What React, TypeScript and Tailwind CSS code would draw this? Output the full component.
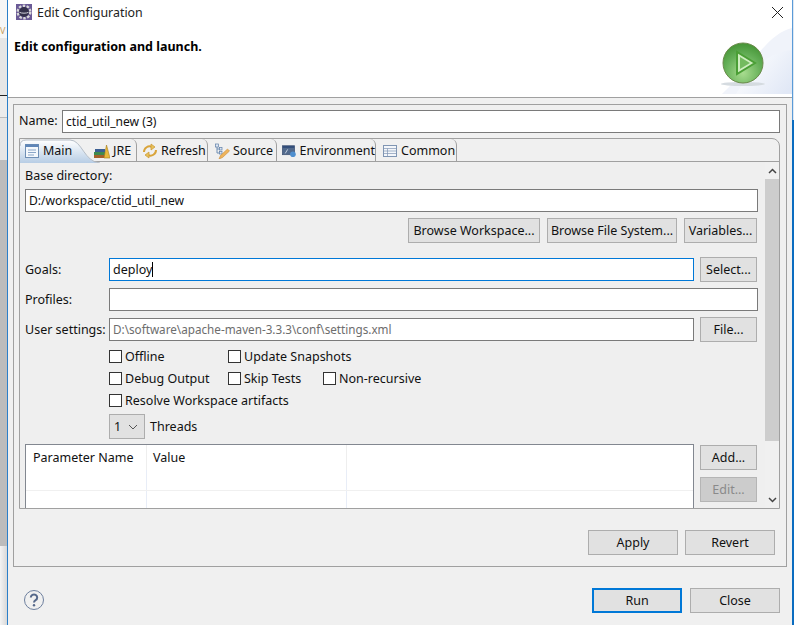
import React from "react";

function Btn({ w, children, disabled, primary, className = "" }: { w: string; children: React.ReactNode; disabled?: boolean; primary?: boolean; className?: string }) {
  const look = primary
    ? "border-2 border-[#0078d7] bg-[#e1e1e1] text-[#111]"
    : disabled
    ? "border border-[#b5b5b5] bg-[#cccccc] text-[#8a8a8a]"
    : "border border-[#adadad] bg-[#e1e1e1] text-[#111]";
  return (
    <div className={`${w} ${look} ${className} h-[25px] shrink-0 flex items-center justify-center`}>{children}</div>
  );
}

function Field({ w, children, focus, muted, tight }: { w: string; children?: React.ReactNode; focus?: boolean; muted?: boolean; tight?: boolean }) {
  return (
    <div className={`${w} h-[23px] shrink-0 bg-white border flex items-center pl-[3px] ${focus ? "border-[#0078d7]" : "border-[#7a7a7a]"} ${muted ? "text-[#6d6d6d] text-[11.7px] pb-[2px]" : "text-[#111]"} ${tight ? "text-[12.1px]" : ""}`}>
      {children}
    </div>
  );
}

function Check({ label, w }: { label: string; w?: string }) {
  return (
    <div className={`flex items-center h-[22px] ${w ?? ""}`}>
      <div className="w-[13px] h-[13px] bg-white border border-[#333] mr-[3px] shrink-0" />
      <span className="text-[#111] pt-[2px]">{label}</span>
    </div>
  );
}

const MainIcon = () => (
  <svg width="16" height="16" viewBox="0 0 16 16"><rect x="1.5" y="1.5" width="13" height="13" fill="#f4f8fc" stroke="#6f8fb5" /><rect x="1.5" y="1.5" width="13" height="2.5" fill="#5f86b8" /><path d="M4 7h8M4 9.500h8M4 12h6" stroke="#8aa6c8" /></svg>
);
const JreIcon = () => (
  <svg width="16" height="16" viewBox="0 0 16 16"><rect x="0" y="12" width="11" height="3" fill="#a5612a" /><rect x="0" y="9" width="11" height="3" fill="#3f8a4e" /><rect x="1" y="6" width="10" height="3" fill="#3b5f93" /><path d="M10 15 12.500 2 16 15z" fill="#e8b93a" stroke="#a67c1a" strokeWidth=".6" /></svg>
);
const RefreshIcon = () => (
  <svg width="16" height="16" viewBox="0 0 16 16" fill="none" stroke="#d9a43a" strokeWidth="2"><path d="M2 9a5.500 5.500 0 0 1 8-5" /><path d="m9 1 4 3-4 3z" fill="#e8c25c" stroke="#c9952e" strokeWidth=".7" /><path d="M14 7a5.500 5.500 0 0 1-8 5" /><path d="m7 15-4-3 4-3z" fill="#e8c25c" stroke="#c9952e" strokeWidth=".7" /></svg>
);
const SourceIcon = () => (
  <svg width="16" height="16" viewBox="0 0 16 16" fill="none"><path d="M3 3v7h3M3 6h3" stroke="#6f8fb5" /><rect x="1.500" y="1" width="3" height="3" fill="#dfe8f3" stroke="#5f7fa8" strokeWidth=".7" /><rect x="5.500" y="4.500" width="2.500" height="2.500" fill="#dfe8f3" stroke="#5f7fa8" strokeWidth=".7" /><rect x="5.500" y="8.500" width="2.500" height="2.500" fill="#dfe8f3" stroke="#5f7fa8" strokeWidth=".7" /><path d="m5 16 1.500-3.500 7-6.500 2 2-7 6.500z" fill="#eeb45c" stroke="#c98b35" strokeWidth=".6" /></svg>
);
const EnvIcon = () => (
  <svg width="18" height="16" viewBox="0 0 18 16"><rect x="0.500" y="1.500" width="15" height="11" fill="#51698c" stroke="#46597a" /><rect x="1" y="2" width="14" height="2" fill="#2e4a78" /><path d="m4 11 3-5" stroke="#dfe8f3" /><circle cx="13.500" cy="12" r="3.500" fill="#4f8fcf" /></svg>
);
const CommonIcon = () => (
  <svg width="16" height="16" viewBox="0 0 16 16" fill="#f3f6fa" stroke="#7f95b3"><rect x="1.500" y="2.500" width="13" height="11" /><path d="M1.500 5.500h13M1.500 8h13M1.500 10.500h13M5.500 5.500v8" fill="none" strokeWidth=".7" /></svg>
);

function Tab({ w, pl, icon, label }: { w: string; pl: string; icon: React.ReactNode; label: string }) {
  return (
    <div className={`${w} ${pl} h-[23px] shrink-0 flex items-center gap-[3px] relative border-r border-[#a0a0a0] rounded-tr-[6px]`}>
      {icon}
      <span className="text-[#111] whitespace-nowrap">{label}</span>
    </div>
  );
}

function MainTab() {
  return (
    <div className="w-[72px] pl-[4px] h-[23px] shrink-0 flex items-center gap-[3px] relative">
      <svg className="absolute left-0 top-0" width="80" height="24" viewBox="0 0 80 24">
        <defs>
          <linearGradient id="tabg" x1="0" x2="0" y1="0" y2="1"><stop offset="0" stopColor="#ffffff" /><stop offset="1" stopColor="#b7cde5" /></linearGradient>
        </defs>
        <path d="M0 24V7Q0 1 6 1H50C62 1 64 23 80 24Z" fill="url(#tabg)" />
        <path d="M0 7Q0 1 6 1H50C62 1 64 23 80 24" fill="none" stroke="#b4bcc6" />
      </svg>
      <span className="relative"><MainIcon /></span>
      <span className="text-[#111] relative">Main</span>
    </div>
  );
}

function LeftStrip() {
  return (
    <div className="w-[7px] h-full shrink-0 flex flex-col overflow-hidden box-content border-r border-[#2b7fc9]">
      <div className="h-[23px] shrink-0 bg-[#f6f6f6]" />
      <div className="h-[15px] shrink-0 bg-[#f6f6f6] text-[#c9a060] text-[9px] leading-[15px]">V</div>
      <div className="h-[57px] shrink-0 bg-[#e6e6e6]" />
      <div className="h-px shrink-0 bg-[#222]" />
      <div className="h-[22px] shrink-0 bg-[#ececec] border-b border-[#bbbbbb]" />
      <div className="h-[42px] shrink-0 bg-[#e6e6e6]" />
      <div className="h-[386px] shrink-0 bg-[#bcbcbc]" />
      <div className="flex-1 bg-gradient-to-r from-[#f4f4f4] to-[#d8d8d8]" />
    </div>
  );
}

export default function App() {
  return (
    <div className="w-[794px] h-[625px] overflow-hidden flex bg-white text-[12.500px] leading-[18px]" style={{ fontFamily: '"Noto Sans", sans-serif' }}>
      <LeftStrip />

      {/* dialog */}
      <div className="w-[784px] h-full shrink-0 flex flex-col bg-[#f0f0f0]">
        {/* header */}
        <div className="h-[98px] shrink-0 bg-white border-b border-[#a0a0a0] relative">
          <div className="h-[24px] flex items-center pl-[8px] gap-[5px]">
            <svg width="16" height="16" viewBox="0 0 16 16">
              <rect width="16" height="16" fill="#6a5a96" />
              <circle cx="8" cy="8" r="6.300" fill="none" stroke="#d8d8d8" strokeWidth="2.400" strokeDasharray="2.500 1.450" />
              <circle cx="8" cy="8" r="5" fill="#33304a" />
              <path d="M3.500 8.300c2 1.200 7 1.200 9 0" fill="none" stroke="#cfcfd8" />
            </svg>
            <span className="text-[#222] text-[12.400px] pt-[2px]">Edit Configuration</span>
          </div>
          <div className="pl-[6px] mt-[14px] font-bold text-[#000]">Edit configuration and launch.</div>
          <svg className="absolute right-[9px] top-[7px]" width="11" height="11" viewBox="0 0 11 11"><path d="M0 0l11 11M11 0 0 11" stroke="#222" strokeWidth="1" /></svg>
          {/* banner */}
          <svg className="absolute right-0 top-[26px]" width="90" height="68" viewBox="0 0 90 68">
            <defs>
              <radialGradient id="ball" cx=".5" cy=".75" r=".8"><stop offset="0" stopColor="#a8dc8f" /><stop offset=".6" stopColor="#62ad55" /><stop offset="1" stopColor="#3f8f2f" /></radialGradient>
              <linearGradient id="bg" x1="0" x2="1" y1=".2" y2=".8"><stop offset="0" stopColor="#ffffff" /><stop offset="1" stopColor="#e1e8f6" /></linearGradient>
            </defs>
            <path d="M20 68C50 40 65 8 90 2V68Z" fill="#f0f3fa" />
            <path d="M34 68C52 40 68 26 90 24V68Z" fill="url(#bg)" />
            <ellipse cx="41" cy="58" rx="22" ry="2" fill="#d5dbe0" />
            <circle cx="41" cy="37" r="20" fill="url(#ball)" stroke="#6a8a4a" />
            <path d="M35 26v22l18-11z" fill="#cfeec0" stroke="#4b9f36" strokeWidth="2" />
            <path d="M38 31v12l10-6z" fill="#74bb5f" />
          </svg>
        </div>

        {/* panel */}
        <div className="ml-[5px] mt-[6px] w-[774px] h-[463px] shrink-0 border border-[#a0a0a0] pt-[5px] pl-[5px] pr-[6px]">
          <div className="flex items-center h-[23px] gap-[5px]">
            <span className="w-[38px] text-[#111] pb-px">Name:</span>
            <Field w="w-[718px]" tight>ctid_util_new (3)</Field>
          </div>

          {/* folder */}
          <div className="mt-[5px] w-[761px] h-[371px] border border-[#a0a0a0] rounded-tr-[8px] overflow-hidden flex flex-col">
            <div className="flex h-[23px] shrink-0 border-b border-[#a0a0a0]">
              <MainTab />
              <Tab w="w-[45px]" pl="pl-[2px]" icon={<JreIcon />} label="JRE" />
              <Tab w="w-[71px]" pl="pl-[5px]" icon={<RefreshIcon />} label="Refresh" />
              <Tab w="w-[69px]" pl="pl-[6px]" icon={<SourceIcon />} label="Source" />
              <Tab w="w-[99px]" pl="pl-[5px]" icon={<EnvIcon />} label="Environment" />
              <Tab w="w-[81px]" pl="pl-[6px]" icon={<CommonIcon />} label="Common" />
            </div>
            <div className="flex flex-1 min-h-0 bg-[#efefef]">
              <div className="w-[744px] shrink-0 pl-[5px] overflow-hidden">
                <div className="mt-[5px] h-[18px] text-[#111]">Base directory:</div>
                <div className="mt-[4px]"><Field w="w-[733px]" tight>D:/workspace/ctid_util_new</Field></div>
                <div className="mt-[6px] flex justify-end w-[732px] gap-[7px]">
                  <Btn w="w-[132px]">Browse Workspace...</Btn>
                  <Btn w="w-[130px]">Browse File System...</Btn>
                  <Btn w="w-[73px]">Variables...</Btn>
                </div>
                <div className="mt-[14px] flex items-center h-[25px]">
                  <span className="w-[84px] text-[#111]">Goals:</span>
                  <Field w="w-[585px]" focus>deploy<span className="w-px h-[15px] bg-black" /></Field>
                  <Btn w="w-[57px]" className="ml-[6px]">Select...</Btn>
                </div>
                <div className="mt-[5px] flex items-center h-[25px]">
                  <span className="w-[84px] text-[#111]">Profiles:</span>
                  <Field w="w-[649px]" />
                </div>
                <div className="mt-[5px] flex items-center h-[25px]">
                  <span className="w-[84px] text-[#111]">User settings:</span>
                  <Field w="w-[585px]" muted>D:\software\apache-maven-3.3.3\conf\settings.xml</Field>
                  <Btn w="w-[57px]" className="ml-[6px]">File...</Btn>
                </div>
                <div className="ml-[84px] mt-[3px] flex flex-col">
                  <div className="flex"><Check w="w-[119px]" label="Offline" /><Check label="Update Snapshots" /></div>
                  <div className="flex"><Check w="w-[119px]" label="Debug Output" /><Check w="w-[95px]" label="Skip Tests" /><Check label="Non-recursive" /></div>
                  <div className="flex"><Check label="Resolve Workspace artifacts" /></div>
                  <div className="flex items-center mt-[3px] gap-[5px]">
                    <div className="w-[36px] h-[25px] bg-[#e1e1e1] border border-[#adadad] flex items-center justify-between pl-[4px] pr-[6px] text-[#111]">
                      1
                      <svg width="10" height="6" viewBox="0 0 10 6" fill="none" stroke="#555"><path d="m1 1 4 4 4-4" /></svg>
                    </div>
                    <span className="text-[#111]">Threads</span>
                  </div>
                </div>
                <div className="mt-[5px] flex">
                  <div className="w-[669px] h-[80px] shrink-0 bg-white border border-[#828790] flex flex-col">
                    <div className="flex h-[25px] shrink-0 text-[#111]">
                      <div className="w-[121px] border-r border-[#eeeeee] pl-[7px] pt-[4px]">Parameter Name</div>
                      <div className="w-[200px] border-r border-[#eeeeee] pl-[6px] pt-[4px]">Value</div>
                    </div>
                    <div className="flex h-[21px] shrink-0 border-b border-[#f0f0f0]">
                      <div className="w-[121px] border-r border-[#e8edf7]" />
                      <div className="w-[200px] border-r border-[#e8edf7]" />
                    </div>
                    <div className="flex flex-1">
                      <div className="w-[121px] border-r border-[#e8edf7]" />
                      <div className="w-[200px] border-r border-[#e8edf7]" />
                    </div>
                  </div>
                  <div className="ml-[6px] flex flex-col gap-[7px] pt-px">
                    <Btn w="w-[57px]">Add...</Btn>
                    <Btn w="w-[57px]" disabled>Edit...</Btn>
                  </div>
                </div>
              </div>
              {/* scrollbar */}
              <div className="w-[15px] shrink-0 ml-px bg-[#f0f0f0] flex flex-col items-center">
                <div className="h-[17px] flex items-center justify-center shrink-0">
                  <svg width="9" height="6" viewBox="0 0 9 6" fill="none" stroke="#444" strokeWidth="1.500"><path d="m1 5 3.500-3.500L8 5" /></svg>
                </div>
                <div className="w-full h-[262px] bg-[#cdcdcd] shrink-0" />
                <div className="flex-1" />
                <div className="h-[17px] flex items-center justify-center shrink-0">
                  <svg width="9" height="6" viewBox="0 0 9 6" fill="none" stroke="#444" strokeWidth="1.500"><path d="m1 1 3.500 3.500L8 1" /></svg>
                </div>
              </div>
            </div>
          </div>

          <div className="mt-[21px] flex justify-end gap-[7px] pr-[5px]">
            <Btn w="w-[90px]">Apply</Btn>
            <Btn w="w-[90px]">Revert</Btn>
          </div>
        </div>

        {/* footer */}
        <div className="mt-[21px] flex items-center h-[25px]">
          <svg className="ml-[16px] mb-[2px]" width="20" height="20" viewBox="0 0 20 20" fill="none">
            <circle cx="10" cy="10" r="9.500" stroke="#6d7f9e" />
            <path d="M6.800 7.500a3.200 3 0 1 1 4.800 2.600c-1 .6-1.600 1-1.600 2.400" stroke="#55688a" strokeWidth="2" />
            <circle cx="10" cy="15.300" r="1.200" fill="#55688a" />
          </svg>
          <div className="flex-1" />
          <div className="flex gap-[8px] mr-[12px]">
            <Btn w="w-[90px]" primary>Run</Btn>
            <Btn w="w-[90px]">Close</Btn>
          </div>
        </div>
      </div>

      {/* right edge of the window behind */}
      <div className="flex-1 h-full flex flex-col">
        <div className="h-[120px] shrink-0 bg-[#dfe8f2] border-l border-[#5a9bd8]" />
        <div className="flex-1 bg-[#0a6cc0]" />
      </div>
    </div>
  );
}
